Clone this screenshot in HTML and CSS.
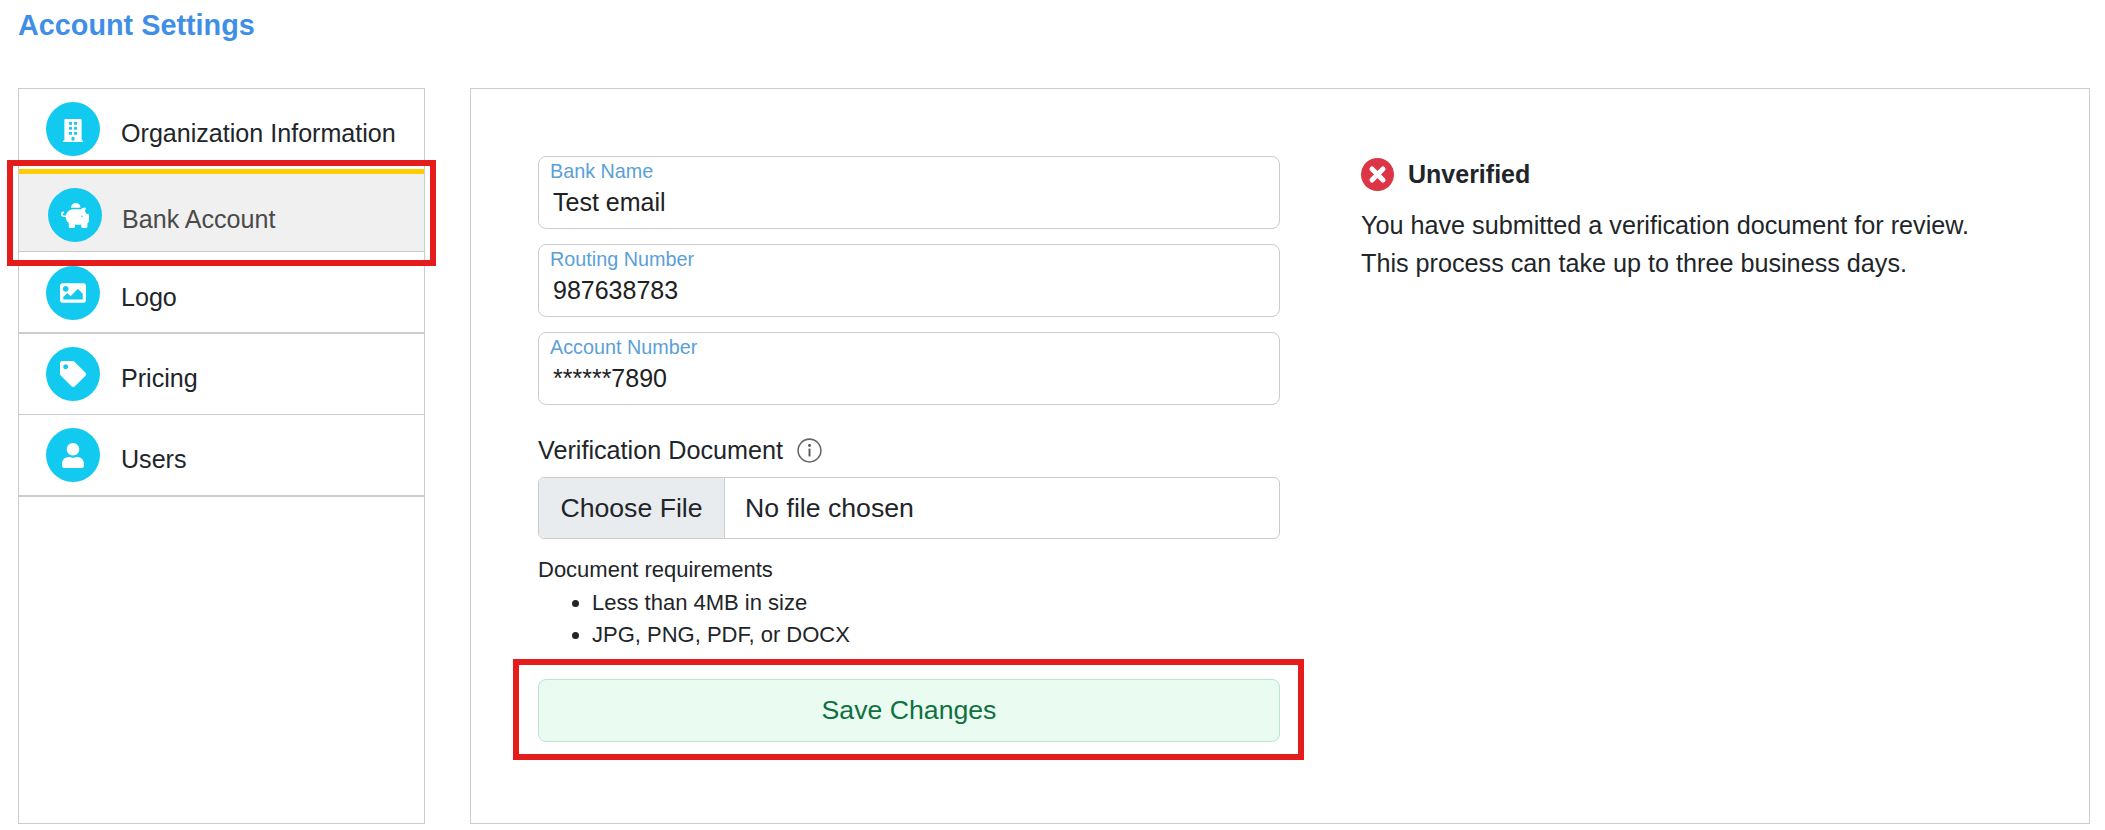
FILE: index.html
```html
<!DOCTYPE html>
<html>
<head lang="en">
    <meta charset="UTF-8">
    <title>Account Settings</title>
    <link rel="stylesheet" href="styles.css">
</head>
<body>
<h1 class="title">Account Settings</h1>
<div class="settings">
    <ul class="side">
        <li class="side-item first">
            <span class="circle">
                <svg class="ico ico-building" viewBox="0 0 448 512"><path fill-rule="evenodd" d="M436 480h-20V24c0-13-11-24-24-24H56C43 0 32 11 32 24v456H12c-7 0-12 5-12 12v20h448v-20c0-7-5-12-12-12zM136 64h64v64h-64zM248 64h64v64h-64zM136 176h64v64h-64zM248 176h64v64h-64zM136 288h64v64h-64zM248 288h64v64h-64zM192 400h64v80h-64z"/></svg>
            </span>
            <span class="side-text">Organization Information</span>
        </li>
        <li class="side-item active">
            <span class="circle">
                <svg class="ico ico-pig" viewBox="0 0 576 512"><path d="M560 224h-29.500c-8.800-20-21.600-37.700-37.500-52.500L512 96h-32c-29.400 0-55.400 13.500-73 34.300-7.600-1.100-15.100-2.300-23-2.300H256c-77.400 0-141.900 55-156.800 128H56c-14.800 0-26.500-13.500-23.500-28.800C34.700 216.100 45 208 56.300 208H57c3.300 0 6-2.700 6-6v-20c0-3.300-2.700-6-6-6-28.500 0-53.900 20.400-57.500 48.600C-4.900 258.800 21.700 288 55 288h41c0 52.200 25.400 98.100 64 127.300V480c0 17.700 14.300 32 32 32h64c17.700 0 32-14.300 32-32v-32h128v32c0 17.700 14.300 32 32 32h64c17.700 0 32-14.300 32-32v-64.700c11.800-8.900 22.300-19.400 31.300-31.300H560c8.800 0 16-7.200 16-16V240c0-8.800-7.200-16-16-16zM432 288c-8.800 0-16-7.200-16-16s7.200-16 16-16 16 7.200 16 16-7.200 16-16 16zM256 96h128c5.400 0 10.700.4 15.900.8.000-.3.100-.5.100-.8 0-53-43-96-96-96s-96 43-96 96c0 2.100.5 4.100.6 6.200 15.200-3.900 31-6.200 47.400-6.200z"/></svg>
            </span>
            <span class="side-text">Bank Account</span>
        </li>
        <li class="side-item logo">
            <span class="circle">
                <svg class="ico ico-wide" viewBox="0 0 512 512"><path d="M464 448H48c-26.510 0-48-21.490-48-48V112c0-26.510 21.490-48 48-48h416c26.510 0 48 21.490 48 48v288c0 26.510-21.490 48-48 48zM112 120c-30.928 0-56 25.072-56 56s25.072 56 56 56 56-25.072 56-56-25.072-56-56-56zM64 384h384V272l-87.515-87.515c-4.686-4.686-12.284-4.686-16.971 0L208 320l-55.515-55.515c-4.686-4.686-12.284-4.686-16.971 0L64 336v48z"/></svg>
            </span>
            <span class="side-text">Logo</span>
        </li>
        <li class="side-item pricing">
            <span class="circle">
                <svg class="ico ico-wide" viewBox="0 0 512 512"><path d="M0 252.118V48C0 21.490 21.490 0 48 0h204.118a48 48 0 0 1 33.941 14.059l211.882 211.882c18.745 18.745 18.745 49.137 0 67.882L293.823 497.941c-18.745 18.745-49.137 18.745-67.882 0L14.059 286.059A48 48 0 0 1 0 252.118zM112 64c-26.510 0-48 21.490-48 48s21.490 48 48 48 48-21.490 48-48-21.490-48-48-48z"/></svg>
            </span>
            <span class="side-text">Pricing</span>
        </li>
        <li class="side-item users">
            <span class="circle">
                <svg class="ico ico-user" viewBox="0 0 448 512"><path d="M224 256c70.700 0 128-57.300 128-128S294.700 0 224 0 96 57.300 96 128s57.300 128 128 128zm89.600 32h-16.700c-22.200 10.200-46.900 16-72.900 16s-50.600-5.800-72.900-16h-16.700C60.200 288 0 348.200 0 422.400V464c0 26.500 21.500 48 48 48h352c26.500 0 48-21.500 48-48v-41.600c0-74.200-60.200-134.400-134.400-134.400z"/></svg>
            </span>
            <span class="side-text">Users</span>
        </li>
    </ul>

    <div class="panel">
        <div class="form">
            <div class="field">
                <div class="field-label">Bank Name</div>
                <div class="field-value">Test email</div>
            </div>
            <div class="field">
                <div class="field-label">Routing Number</div>
                <div class="field-value">987638783</div>
            </div>
            <div class="field">
                <div class="field-label">Account Number</div>
                <div class="field-value">******7890</div>
            </div>

            <div class="doc-label">
                Verification Document
                <svg class="info" viewBox="0 0 16 16"><circle cx="8" cy="8" r="7.300" fill="none" stroke="#666" stroke-width="1"/><rect x="7.400" y="6.800" width="1.200" height="5" fill="#555"/><circle cx="8" cy="4.800" r=".9" fill="#555"/></svg>
            </div>
            <div class="file">
                <div class="file-btn">Choose File</div>
                <div class="file-name">No file chosen</div>
            </div>

            <div class="req">
                Document requirements
                <ul class="req-list">
                    <li>Less than 4MB in size</li>
                    <li>JPG, PNG, PDF, or DOCX</li>
                </ul>
            </div>

            <div class="save">Save Changes</div>
        </div>

        <div class="status">
            <div class="status-head">
                <svg class="status-ico" viewBox="0 0 33 33"><circle cx="16.500" cy="16.500" r="16.500" fill="#dc3545"/><path d="M11 11l11 11M22 11L11 22" stroke="#fff" stroke-width="5" stroke-linecap="round"/></svg>
                Unverified
            </div>
            <p class="status-text">You have submitted a verification document for review.<br>This process can take up to three business days.</p>
        </div>
    </div>
</div>
<!-- red annotation boxes -->
<div class="mark mark-side"></div>
<div class="mark mark-save"></div>
</body>
</html>
```

FILE: styles.css
```css
* {
    padding: 0;
    margin: 0;
    box-sizing: border-box;
    list-style: none;
}
body {
    position: relative;
    height: 830px;
    padding: 0 15px 0 18px;
    overflow: hidden;
    font-family: "Liberation Sans", Arial, sans-serif;
    color: #212529;
    background-color: #fff;
}
.title {
    height: 88px;
    padding-top: 7px;
    font-size: 28.800px;
    line-height: 36px;
    font-weight: bold;
    color: #3f8fe6;
}
.settings {
    display: flex;
    gap: 45px;
    height: 736px;
}

/* left menu */
.side {
    width: 407px;
    flex-shrink: 0;
    border: 1px solid #ccc;
}
.side-item {
    display: flex;
    padding: 13px 0 0 27px;
    border-bottom: 2px solid #ccc;
}
.side-item.first {
    height: 80px;
    border-bottom: 0;
}
.side-item.active {
    height: 83px;
    padding: 14px 0 0 29px;
    border-top: 5px solid #ffcc00;
    border-bottom: 1px solid #ccc;
    background-color: #f0f0f0;
    color: #4a4a4a;
}
.side-item.active .side-text {
    margin-left: 20px;
}
.side-item.logo {
    height: 82px;
    padding-top: 14px;
}
.side-item.pricing {
    height: 81px;
    border-bottom-width: 1px;
}
.side-item.users {
    height: 82px;
}
.circle {
    display: flex;
    align-items: center;
    justify-content: center;
    width: 54px;
    height: 54px;
    flex-shrink: 0;
    border-radius: 50%;
    background-color: #12c9f0;
}
.ico {
    fill: #fff;
}
.ico-building {
    width: 22px;
    height: 23px;
    margin-top: 2px;
}
.ico-pig {
    width: 28px;
    height: 25px;
}
.ico-wide {
    width: 26px;
    height: 26px;
}
.ico-user {
    width: 22px;
    height: 25px;
}
.side-text {
    margin-left: 21px;
    font-size: 25.100px;
    line-height: 62px;
}

/* main panel */
.panel {
    display: flex;
    gap: 81px;
    flex: 1;
    padding: 67px 0 0 67px;
    border: 1px solid #ccc;
}
.form {
    width: 742px;
    flex-shrink: 0;
}
.field {
    height: 73px;
    margin-bottom: 15px;
    padding: 2px 14px 0 11px;
    border: 1px solid #ccc;
    border-radius: 8px;
}
.field-label {
    font-size: 19.800px;
    line-height: 24px;
    color: #5b9fd6;
}
.field-value {
    padding: 1px 0 0 3px;
    font-size: 25px;
    line-height: 36px;
    color: #212121;
}
.doc-label {
    display: flex;
    align-items: center;
    gap: 14px;
    height: 34px;
    margin-top: 28px;
    font-size: 25.200px;
}
.info {
    width: 25px;
    height: 25px;
}
.file {
    display: flex;
    height: 62px;
    margin-top: 10px;
    border: 1px solid #ccc;
    border-radius: 6px;
    font-size: 26.670px;
    line-height: 60px;
    overflow: hidden;
}
.file-btn {
    width: 186px;
    text-align: center;
    border-right: 1px solid #ccc;
    background-color: #e9ecef;
}
.file-name {
    padding-left: 20px;
}
.req {
    margin-top: 15px;
    font-size: 22px;
    line-height: 32.500px;
}
.req-list {
    padding-left: 54px;
}
.req-list li {
    list-style: disc;
}
.save {
    height: 63px;
    margin-top: 27px;
    border: 1px solid #b9e5cd;
    border-radius: 8px;
    background-color: #eafcf2;
    color: #0f7040;
    font-size: 26.670px;
    line-height: 61px;
    text-align: center;
}

/* status text */
.status-head {
    display: flex;
    align-items: center;
    gap: 14px;
    height: 33px;
    margin-top: 2px;
    font-size: 25px;
    font-weight: bold;
}
.status-ico {
    width: 33px;
    height: 33px;
}
.status-text {
    margin-top: 15px;
    font-size: 25.200px;
    line-height: 38px;
}

/* annotations drawn over the page */
.mark {
    position: absolute;
    border: 6px solid #e61c1c;
}
.mark-side {
    left: 7px;
    top: 160px;
    width: 429px;
    height: 106px;
}
.mark-save {
    left: 513px;
    top: 659px;
    width: 791px;
    height: 101px;
}
```
